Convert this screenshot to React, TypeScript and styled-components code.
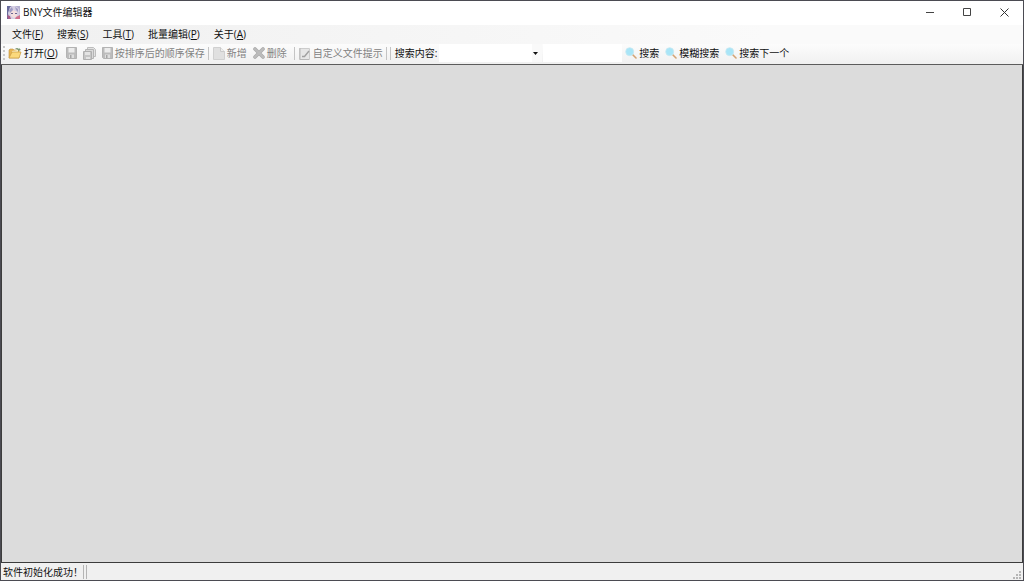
import React from "react";
import styled, { createGlobalStyle, css } from "styled-components";

const GlobalStyle = createGlobalStyle`
  *, *::before, *::after { box-sizing: border-box; }
  body { margin: 0; }
  button, input, select { font: inherit; color: inherit; }
`;

const Window = styled.div`
  display: flex;
  flex-direction: column;
  height: 100vh;
  border: 1px solid #4b4b52;
  background: #f0f0f0;
  color: #101010;
  font-family: "Open Sans", "Noto Sans CJK SC", sans-serif;
  font-size: 10px;
  line-height: 14px;
  white-space: nowrap;
`;

const TitleBar = styled.header`
  display: flex;
  align-items: center;
  flex: none;
  height: 24px;
  padding: 0 0 2px 6px;
  background: #ffffff;
`;

const Title = styled.h1`
  flex: 1;
  margin: 0 0 0 3px;
  font-size: 10px;
  font-weight: 400;
`;

const CaptionButton = styled.button`
  display: flex;
  align-items: center;
  justify-content: center;
  width: 37px;
  height: 22px;
  padding: 0;
  border: 0;
  background: transparent;
`;

const MenuBar = styled.nav`
  display: flex;
  align-items: center;
  flex: none;
  gap: 14px;
  height: 19px;
  padding: 0 0 2px 11px;
  background: linear-gradient(to right, #f0f0f0, #fafafa 75%);
`;

const MenuButton = styled.button`
  padding: 0;
  border: 0;
  background: transparent;
`;

const ToolBar = styled.div`
  display: flex;
  align-items: center;
  flex: none;
  height: 21px;
  padding: 0 0 2px 2px;
  border-bottom: 1px solid #5c5c5c;
  background: linear-gradient(#fcfcfc, #f0f0f0);
`;

const Grip = styled.span`
  width: 2px;
  height: 14px;
  background: repeating-linear-gradient(#c8c8c8 0 2px, transparent 2px 4px);
`;

const ToolButton = styled.button`
  display: flex;
  align-items: center;
  gap: 2px;
  height: 18px;
  padding: 0 3px;
  border: 0;
  background: transparent;

  &:disabled { color: #828282; }
  svg { flex: none; }
`;

const Separator = styled.span<{ $before?: number }>`
  flex: none;
  width: 1px;
  height: 13px;
  margin: 0 1px 0 ${({ $before = 0 }) => $before}px;
  background: #c4c4c4;
`;

const Group = styled.div`
  display: flex;
  align-items: center;
  margin-left: 2px;
`;

const FieldLabel = styled.label`
  margin: 0 2px 0 3px;
`;

const field = css`
  height: 18px;
  border: 0;
  border-radius: 0;
  outline: 0;
  background-color: #ffffff;
`;

const ComboBox = styled.div`
  display: flex;
  align-items: center;
  position: relative;
  width: 103px;
  margin-right: 1px;

  svg { position: absolute; right: 4px; pointer-events: none; }
`;

const ComboSelect = styled.select`
  ${field}
  width: 100%;
  padding: 0 12px 0 2px;
  appearance: none;
  background-image: linear-gradient(to left, #f9f9f9 10px, transparent 10px);
`;

const TextBox = styled.input`
  ${field}
  width: 79px;
  padding: 0 2px;
`;

const Workspace = styled.main`
  flex: 1;
  min-height: 0;
  border: solid #3c3c3c;
  border-width: 0 1px 1px;
  background: #dcdcdc;
`;

const StatusBar = styled.footer`
  display: flex;
  align-items: center;
  flex: none;
  height: 17px;
  padding: 0 2px;
  background: #f0f0f0;
`;

const StatusCell = styled.span`
  flex: none;
  height: 14px;
  border-right: 1px solid #b4b4b4;
  & + & { width: 3px; }
`;

const ResizeGrip = styled.svg`
  margin: auto 0 1px auto;
`;

const AppIcon = () => (
  <svg width="13" height="13" viewBox="0 0 13 13" aria-hidden="true">
    <rect width="13" height="13" fill="#b3afd0" />
    <path d="M0 0h4L2 6v7H0z" fill="#66699a" />
    <path d="M3 1Q8-2 12 3l1 7-3 3H2L1 7z" fill="#d6cfe3" />
    <path d="M3 6l3-2 4 2v4l-3 2-3-2z" fill="#f4dedd" />
    <path d="M2 4l3-3 1 3-3 3zM8 1l3 2v3L9 4z" fill="#9f9bc4" />
    <path d="M4 7h2v1H4zM8 7h2v1H8z" fill="#6b6492" />
    <path d="M0 9l3 1 1 3H1z" fill="#a85c88" />
    <path d="M9 11l4-2v4H8z" fill="#d0708c" />
  </svg>
);

const FolderIcon = () => (
  <svg width="14" height="12" viewBox="0 0 14 12" aria-hidden="true">
    <path d="M1 11V3l1-1h3l1 1h5v8z" fill="#e6b455" stroke="#c4953f" strokeWidth=".6" />
    <path d="M4 4l6-1v3H4z" fill="#fff6d2" />
    <path d="M1 11l3-6h9l-2 6z" fill="#fbd97c" stroke="#cc9b3d" strokeWidth=".7" />
    <path d="M7 2q2-2 4 0V1l2 2-3 1V3q-1-1-3-1" fill="#7d9a74" />
  </svg>
);

const SaveIcon = () => (
  <svg width="11" height="12" viewBox="0 0 11 12" aria-hidden="true">
    <path d="M.5.5h10v11h-9l-1-1z" fill="#bcbcbc" stroke="#b3b3b3" />
    <path d="M2.5 1h6v4.5h-6z" fill="#ececec" />
    <path d="M3 7.5h5V11H3z" fill="#dedede" />
    <path d="M4 8h1.5v3H4z" fill="#a5a5a5" />
  </svg>
);

const SaveAllIcon = () => (
  <svg width="13" height="13" viewBox="0 0 13 13" aria-hidden="true">
    <path d="M4.5.5h6l2 2v7h-8z" fill="#e2e2e2" stroke="#bdbdbd" />
    <path d="M2.5 2.5h8v9h-8z" fill="#dadada" stroke="#b5b5b5" />
    <path d="M.5 4.5h8v8h-8z" fill="#c6c6c6" stroke="#b0b0b0" />
    <path d="M2 5h5v3H2zM3 10h4v2H3z" fill="#e4e4e4" />
  </svg>
);

const PageIcon = () => (
  <svg width="12" height="13" viewBox="0 0 12 13" aria-hidden="true">
    <path d="M.5.5h7l4 4v8H.5z" fill="#e0e0e0" stroke="#d0d0d0" />
    <path d="M7.5.5v4h4" fill="#eee" stroke="#cacaca" />
  </svg>
);

const DeleteIcon = () => (
  <svg width="12" height="12" viewBox="0 0 12 12" aria-hidden="true">
    <path d="M2 2l8 8M10 2l-8 8" stroke="#ababab" strokeWidth="3.6" strokeLinecap="round" />
    <path d="M2 2l8 8M10 2l-8 8" stroke="#bcbcbc" strokeWidth="2.2" strokeLinecap="round" />
  </svg>
);

const NoteIcon = () => (
  <svg width="12" height="13" viewBox="0 0 12 13" aria-hidden="true">
    <path d="M.5 1.5h10v11H.5z" fill="#e6e6e6" stroke="#cccccc" />
    <path d="M1 1v11.5h9" fill="none" stroke="#b8b8b8" />
    <path d="M3 9.5h2.5L10 4" fill="none" stroke="#a0a0a0" strokeWidth="1.4" />
  </svg>
);

const SearchIcon = () => (
  <svg width="12" height="12" viewBox="0 0 12 12" aria-hidden="true">
    <path d="M7 7l4 4" stroke="#d3a374" strokeWidth="1.6" strokeLinecap="round" />
    <circle cx="4.7" cy="4.7" r="4" fill="#a9e5f7" stroke="#c6e8f1" strokeWidth=".8" />
  </svg>
);

const menus = [
  { text: "文件", hotkey: "F" },
  { text: "搜索", hotkey: "S" },
  { text: "工具", hotkey: "T" },
  { text: "批量编辑", hotkey: "P" },
  { text: "关于", hotkey: "A" },
];

const gripDots = [[6, 0], [3, 3], [6, 3], [0, 6], [3, 6], [6, 6]];

export default function App() {
  return (
    <Window>
      <GlobalStyle />
      <TitleBar>
        <AppIcon />
        <Title>BNY文件编辑器</Title>
        <CaptionButton aria-label="最小化">
          <svg width="9" height="9"><path d="M0 4.5h8" stroke="#444" /></svg>
        </CaptionButton>
        <CaptionButton aria-label="最大化">
          <svg width="9" height="9"><path d="M.5.5h7v7h-7z" fill="none" stroke="#444" /></svg>
        </CaptionButton>
        <CaptionButton aria-label="关闭">
          <svg width="9" height="9"><path d="M.5.5l8 8M8.5.5l-8 8" stroke="#333" /></svg>
        </CaptionButton>
      </TitleBar>
      <MenuBar aria-label="主菜单">
        {menus.map(({ text, hotkey }) => (
          <MenuButton key={hotkey}>{text}(<u>{hotkey}</u>)</MenuButton>
        ))}
      </MenuBar>
      <ToolBar role="toolbar" aria-label="工具栏">
        <Grip />
        <ToolButton><FolderIcon /><span>打开(<u>O</u>)</span></ToolButton>
        <Group>
          <ToolButton disabled aria-label="保存"><SaveIcon /></ToolButton>
          <ToolButton disabled aria-label="全部保存"><SaveAllIcon /></ToolButton>
          <ToolButton disabled><SaveIcon />按排序后的顺序保存</ToolButton>
        </Group>
        <Separator />
        <ToolButton disabled><PageIcon />新增</ToolButton>
        <ToolButton disabled><DeleteIcon />删除</ToolButton>
        <Separator $before={4} />
        <ToolButton disabled><NoteIcon />自定义文件提示</ToolButton>
        <Separator />
        <Separator $before={2} />
        <FieldLabel htmlFor="query">搜索内容:</FieldLabel>
        <ComboBox>
          <ComboSelect id="query" />
          <svg width="5" height="3" aria-hidden="true"><path d="M0 0h5L2.5 3z" fill="#111" /></svg>
        </ComboBox>
        <TextBox aria-label="搜索文本" />
        <ToolButton><SearchIcon />搜索</ToolButton>
        <ToolButton><SearchIcon />模糊搜索</ToolButton>
        <ToolButton><SearchIcon />搜索下一个</ToolButton>
      </ToolBar>
      <Workspace />
      <StatusBar>
        <StatusCell role="status">软件初始化成功！</StatusCell>
        <StatusCell />
        <ResizeGrip width="8" height="8" aria-hidden="true">
          {gripDots.map(([x, y]) => (
            <rect key={`${x}-${y}`} x={x} y={y} width="2" height="2" fill="#b5b5b5" />
          ))}
        </ResizeGrip>
      </StatusBar>
    </Window>
  );
}
